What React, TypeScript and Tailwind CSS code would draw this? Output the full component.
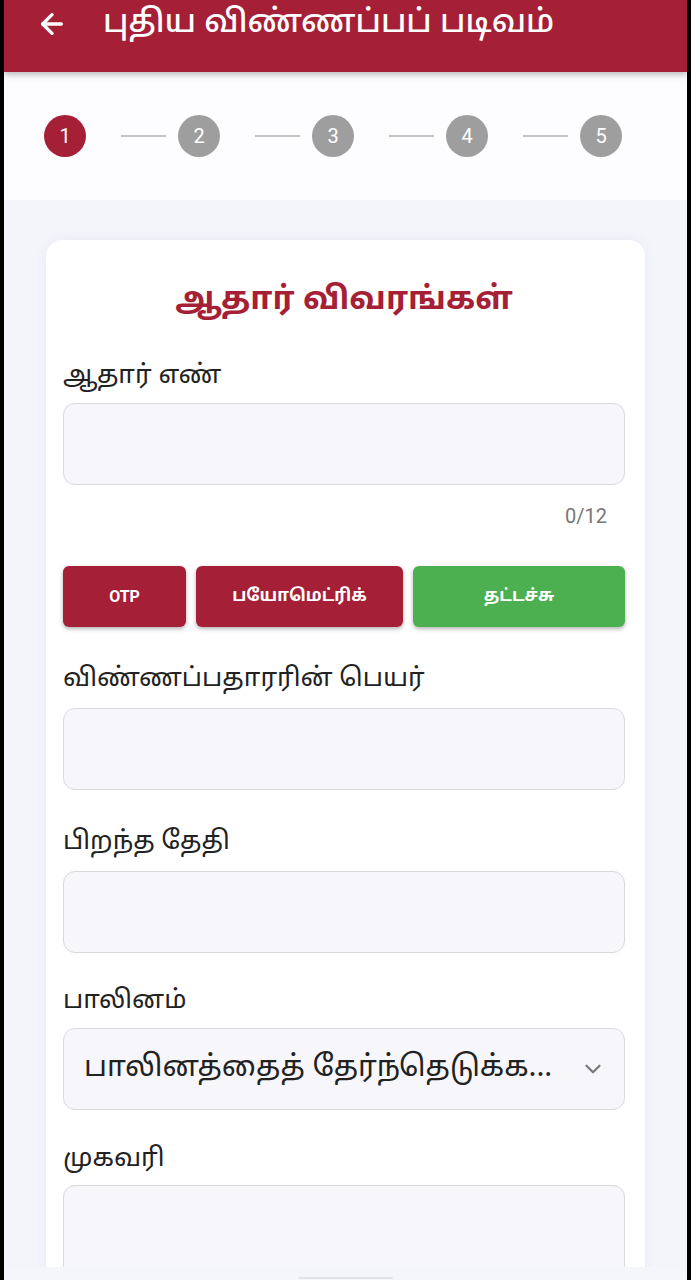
import React from 'react';
import { ArrowLeft, ChevronDown } from 'lucide-react';

const tamil = { fontFamily: '"Noto Sans Tamil", "Noto Sans", "Lohit Tamil", Roboto, sans-serif' };

const Step: React.FC<{ n: number; active?: boolean; last?: boolean }> = ({ n, active, last }) => (
    <div className="flex items-center">
        <div className={`flex h-[42px] w-[42px] items-center justify-center rounded-full text-[20px] text-white font-['Roboto',sans-serif] ${active ? 'bg-[#a51f36]' : 'bg-[#9e9e9e]'}`}>
            {n}
        </div>
        {!last && <div className="ml-[35px] mr-[12px] h-[2px] w-[45px] bg-[#c4c4c4]" />}
    </div>
);

// label + boxed input; spacing differs a little per row in the screenshot
const Field: React.FC<{ label: string; top: string; gap: string; children?: React.ReactNode; tall?: boolean }> = ({ label, top, gap, children, tall }) => (
    <div className={top}>
        <div className="text-[26px] leading-[34px] text-[#222]" style={tamil}>{label}</div>
        <div className={gap}>
            {children ?? (
                <div className={`rounded-[12px] border border-[#d9d9de] bg-[#f7f7fb] ${tall ? 'h-[160px]' : 'h-[82px]'}`} />
            )}
        </div>
    </div>
);

export default function App() {
    return (
        <div className="flex h-[1280px] bg-black px-[4px]">
            <div className="flex w-full flex-col overflow-hidden bg-[#f4f5fb]">
                <header className="relative z-10 flex h-[72px] shrink-0 items-start bg-[#a51f36] pl-[32px] pt-[6px] shadow-[0_3px_6px_rgba(0,0,0,0.25)]">
                    <div className="flex h-[36px] items-center">
                        <ArrowLeft size={32} strokeWidth={2.5} className="text-white" />
                    </div>
                    <h1 className="ml-[35px] text-[32px] font-medium leading-[36px] text-white" style={tamil}>புதிய விண்ணப்பப் படிவம்</h1>
                </header>

                <div className="flex h-[128px] shrink-0 items-center bg-[#fdfdff] pl-[40px]">
                    <Step n={1} active />
                    <Step n={2} />
                    <Step n={3} />
                    <Step n={4} />
                    <Step n={5} last />
                </div>

                <div className="flex-1 overflow-hidden px-[42px] pt-[40px]">
                    <div className="rounded-t-[16px] bg-white pb-[40px] pl-[17px] pr-[20px] pt-[40px] shadow-[0_0_12px_rgba(80,90,180,0.08)]">
                        <h2 className="text-center text-[32px] font-bold leading-[42px] text-[#a51f36]" style={tamil}>ஆதார் விவரங்கள்</h2>

                        <div className="mt-[38px]">
                            <div className="text-[26px] leading-[34px] text-[#222]" style={tamil}>ஆதார் எண்</div>
                            <div className="mt-[9px] h-[82px] rounded-[12px] border border-[#d9d9de] bg-[#f7f7fb]" />
                            <div className="mt-[17px] pr-[18px] text-right text-[20px] leading-[28px] text-[#777] font-['Roboto',sans-serif]">0/12</div>
                        </div>

                        <div className="mt-[36px] flex gap-[10px] text-[16px] font-bold text-white">
                            <button className="flex h-[61px] w-[123px] items-center justify-center rounded-[6px] bg-[#a51f36] shadow-[0_2px_4px_rgba(0,0,0,0.3)] font-['Roboto',sans-serif]">OTP</button>
                            <button className="flex h-[61px] w-[207px] items-center justify-center rounded-[6px] bg-[#a51f36] text-[17px] shadow-[0_2px_4px_rgba(0,0,0,0.3)]" style={tamil}>பயோமெட்ரிக்</button>
                            <button className="flex h-[61px] flex-1 items-center justify-center rounded-[6px] bg-[#4caf50] text-[17px] shadow-[0_2px_4px_rgba(0,0,0,0.3)]" style={tamil}>தட்டச்சு</button>
                        </div>

                        <Field label="விண்ணப்பதாரரின் பெயர்" top="mt-[36px]" gap="mt-[11px]" />
                        <Field label="பிறந்த தேதி" top="mt-[36px]" gap="mt-[11px]" />
                        <Field label="பாலினம்" top="mt-[32px]" gap="mt-[9px]">
                            <div className="flex h-[82px] items-center justify-between rounded-[12px] border border-[#d9d9de] bg-[#f7f7fb] pl-[20px] pr-[18px]">
                                <span className="text-[29.5px] text-[#222]" style={tamil}>பாலினத்தைத் தேர்ந்தெடுக்க...</span>
                                <ChevronDown size={26} strokeWidth={2} className="text-[#777]" />
                            </div>
                        </Field>
                        <Field label="முகவரி" top="mt-[33px]" gap="mt-[8px]" tall />
                    </div>
                </div>

                <div className="flex h-[13px] shrink-0 justify-center bg-[#f5f6fb]">
                    <div className="mt-[10px] h-[2px] w-[95px] rounded bg-[#e2e2e8]" />
                </div>
            </div>
        </div>
    );
}
